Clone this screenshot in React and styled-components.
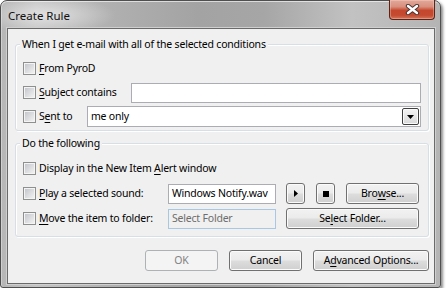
import React from "react";
import styled, { createGlobalStyle } from "styled-components";

const GlobalStyle = createGlobalStyle`
  html, body {
    margin: 0;
    padding: 0;
    background: #ffffff;
  }
  body {
    font-family: "Noto Sans", "Open Sans", sans-serif;
    font-size: 10.5px;
    letter-spacing: -0.2px;
    line-height: 15px;
    color: #000;
  }
`;

const Window = styled.div`
  box-sizing: border-box;
  width: 441px;
  height: 288px;
  display: flex;
  flex-direction: column;
  padding: 0 5px 3px 6px;
  border: 1px solid #4f4f4f;
  border-radius: 7px 7px 3px 3px;
  background:
    radial-gradient(ellipse 70px 18px at 45px 14px, rgba(255, 255, 255, 0.5), rgba(255, 255, 255, 0) 100%),
    linear-gradient(90deg, #b6b6b6 0%, #c4c4c4 8%, #b0b0b0 25%, #a3a3a3 45%, #a6a6a6 60%, #c2c2c2 80%, #b4b4b4 100%);
  box-shadow: inset 0 1px 0 rgba(255, 255, 255, 0.6),
    inset 1px 0 0 rgba(255, 255, 255, 0.35),
    2px 2px 3px rgba(0, 0, 0, 0.45);
`;

const TitleBar = styled.div`
  height: 27px;
  display: flex;
  justify-content: space-between;
  align-items: flex-start;
`;

const Title = styled.span`
  margin: 7px 0 0 1px;
  font-size: 11.5px;
  letter-spacing: 0;
  color: #111;
`;

const CloseButton = styled.div`
  box-sizing: border-box;
  width: 46px;
  height: 20px;
  margin: -1px 0 0 0;
  border: 1px solid #5a2419;
  border-top: none;
  border-radius: 0 0 4px 4px;
  background: linear-gradient(#e2a89a 0%, #d8907e 35%, #c5472d 55%, #c44a30 80%, #d47459 100%);
  box-shadow: inset 0 0 0 1px rgba(255, 220, 210, 0.35);
  display: flex;
  align-items: center;
  justify-content: center;
`;

// dialog body below the frame caption
const Client = styled.div`
  flex: 1;
  display: flex;
  flex-direction: column;
  padding: 15px 5px 0 7px;
  background: #f0f0f0;
  border: 1px solid #6a6a6a;
  box-shadow: 0 0 0 1px #cfcfcf;
`;

const Group = styled.div`
  border: 1px solid #d5dfe5;
  border-radius: 3px;
  box-shadow: inset 1px 1px 0 #ffffff, 1px 1px 0 #ffffff;
  padding: 0 7px ${(p) => p.$bottom}px 7px;
  margin-bottom: ${(p) => p.$after}px;
  display: flex;
  flex-direction: column;
`;

const Legend = styled.div`
  align-self: flex-start;
  margin: -8px 0 ${(p) => p.$space}px -3px;
  padding: 0 2px;
  background: #f0f0f0;
  line-height: 15px;
`;

const Rows = styled.div`
  display: flex;
  flex-direction: column;
  gap: ${(p) => p.$gap}px;
`;

const Row = styled.div`
  height: 21px;
  display: flex;
  align-items: center;
`;

const CheckLabel = styled.label`
  display: flex;
  align-items: center;
  gap: 3px;
  flex-shrink: 0;
  width: ${(p) => (p.$width ? `${p.$width}px` : "auto")};
`;

const Check = styled.span`
  box-sizing: border-box;
  width: 13px;
  height: 13px;
  padding: 1px;
  border: 1px solid #8e8f8f;
  background: linear-gradient(135deg, #c4c7cc, #f1f1f1) content-box,
    #f4f4f4 padding-box;
`;

const Key = styled.u`
  text-decoration: underline;
  text-underline-offset: 2px;
  text-decoration-thickness: 1px;
`;

const TextBox = styled.div`
  box-sizing: border-box;
  height: 20px;
  flex: ${(p) => (p.$width ? `0 0 ${p.$width}px` : "1")};
  padding: 0 3px;
  border: 1px solid ${(p) => (p.$disabled ? "#a9c6e3" : "#abadb3")};
  background: ${(p) => (p.$disabled ? "#f0f0f0" : "#ffffff")};
  color: ${(p) => (p.$disabled ? "#6d6d6d" : "#000")};
  display: flex;
  align-items: center;
  white-space: nowrap;
  overflow: hidden;
`;

const Combo = styled.div`
  box-sizing: border-box;
  flex: 1;
  height: 21px;
  padding: 1px 1px 1px 3px;
  border: 1px solid #abadb3;
  background: #ffffff;
  display: flex;
  align-items: center;
  justify-content: space-between;
`;

const DropButton = styled.div`
  box-sizing: border-box;
  width: 17px;
  height: 17px;
  border: 1px solid #3f3f3f;
  border-radius: 2px;
  background: linear-gradient(#f4f4f4, #d9d9d9);
  box-shadow: inset 0 0 0 1px #fafafa;
  display: flex;
  align-items: center;
  justify-content: center;
`;

const Button = styled.div`
  box-sizing: border-box;
  flex: 0 0 ${(p) => p.$w}px;
  height: 21px;
  margin-left: ${(p) => p.$ml || 0}px;
  border: 1px solid ${(p) => (p.$disabled ? "#adb2b5" : "#707070")};
  border-radius: 3px;
  background: ${(p) =>
    p.$disabled
      ? "#f4f4f4"
      : "linear-gradient(#f2f2f2 0%, #ebebeb 48%, #dddddd 52%, #cfcfcf 100%)"};
  box-shadow: inset 0 0 0 1px ${(p) => (p.$disabled ? "#f4f4f4" : "#fbfbfb")};
  color: ${(p) => (p.$disabled ? "#838383" : "#000")};
  display: flex;
  align-items: center;
  justify-content: center;
  white-space: nowrap;
`;

const Footer = styled.div`
  display: flex;
  justify-content: flex-end;
  gap: 11px;
`;

function CheckBox({ width, children }) {
  return (
    <CheckLabel $width={width}>
      <Check />
      <span>{children}</span>
    </CheckLabel>
  );
}

export default function App() {
  return (
    <>
      <GlobalStyle />
      <Window>
        <TitleBar>
          <Title>Create Rule</Title>
          <CloseButton>
            <svg width="15" height="11" viewBox="0 0 15 11">
              <path d="M3 2 L12 9 M12 2 L3 9" stroke="#4a3431" strokeWidth="4.4" strokeLinecap="round" />
              <path d="M3 2 L12 9 M12 2 L3 9" stroke="#ffffff" strokeWidth="2.4" strokeLinecap="round" />
            </svg>
          </CloseButton>
        </TitleBar>
        <Client>
          <Group $bottom={3} $after={12}>
            <Legend $space={6}>When I get e-mail with all of the selected conditions</Legend>
            <Rows $gap={3}>
              <Row>
                <CheckBox>
                  <Key>F</Key>rom PyroD
                </CheckBox>
              </Row>
              <Row>
                <CheckBox width={108}>
                  <Key>S</Key>ubject contains
                </CheckBox>
                <TextBox />
              </Row>
              <Row>
                <CheckBox width={64}>
                  S<Key>e</Key>nt to
                </CheckBox>
                <Combo>
                  <span>me only</span>
                  <DropButton>
                    <svg width="7" height="4" viewBox="0 0 7 4">
                      <path d="M0 0 H7 L3.5 4 Z" fill="#000" />
                    </svg>
                  </DropButton>
                </Combo>
              </Row>
            </Rows>
          </Group>
          <Group $bottom={7} $after={13}>
            <Legend $space={7}>Do the following</Legend>
            <Rows $gap={4}>
              <Row>
                <CheckBox>
                  Display in the New Item <Key>A</Key>lert window
                </CheckBox>
              </Row>
              <Row>
                <CheckBox width={145}>
                  <Key>P</Key>lay a selected sound:
                </CheckBox>
                <TextBox $width={108}>Windows Notify.wav</TextBox>
                <Button $w={19} $ml={10}>
                  <svg width="4" height="7" viewBox="0 0 4 7">
                    <path d="M0 0 L4 3.5 L0 7 Z" fill="#000" />
                  </svg>
                </Button>
                <Button $w={19} $ml={11}>
                  <svg width="6" height="6" viewBox="0 0 6 6">
                    <rect width="6" height="6" fill="#000" />
                  </svg>
                </Button>
                <Button $w={73} $ml={11}>
                  Bro<Key>w</Key>se...
                </Button>
              </Row>
              <Row>
                <CheckBox width={145}>
                  <Key>M</Key>ove the item to folder:
                </CheckBox>
                <TextBox $width={108} $disabled>
                  Select Folder
                </TextBox>
                <Button $w={133} $ml={10}>
                  Se<Key>l</Key>ect Folder...
                </Button>
              </Row>
            </Rows>
          </Group>
          <Footer>
            <Button $w={73} $disabled>
              OK
            </Button>
            <Button $w={73}>Cancel</Button>
            <Button $w={116}>
              A<Key>d</Key>vanced Options...
            </Button>
          </Footer>
        </Client>
      </Window>
    </>
  );
}
